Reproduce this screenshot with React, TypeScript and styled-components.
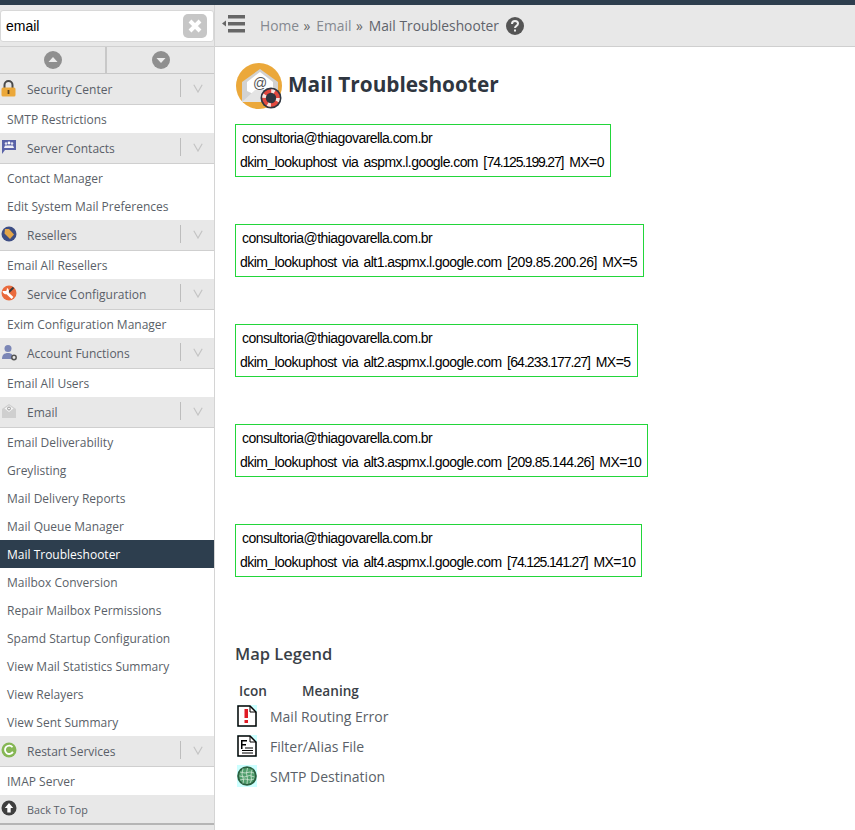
import React from 'react';
import styled, { createGlobalStyle } from 'styled-components';

const Global = createGlobalStyle`
    html, body {
        margin: 0;
        padding: 0;
        background: #fff;
        font-family: "Open Sans", sans-serif;
    }
`;

const Page = styled.div`
    width: 855px;
    height: 830px;
    overflow: hidden;
    display: flex;
    flex-direction: column;
`;

const TopStrip = styled.div`
    height: 5px;
    flex: none;
    background: #2d3e4e;
`;

const Body = styled.div`
    display: flex;
    flex: 1;
    min-height: 0;
`;

const Sidebar = styled.aside`
    width: 214px;
    flex: none;
    border-right: 1px solid #d4d4d4;
    display: flex;
    flex-direction: column;
    background: #fff;
`;

const SearchWrap = styled.div`
    height: 42px;
    flex: none;
    box-sizing: border-box;
    padding: 5px 0 4px;
    background: #e8e8e8;
    border-bottom: 1px solid #d0d0d0;
`;

const SearchBox = styled.div`
    height: 32px;
    box-sizing: border-box;
    background: #fff;
    border: 1px solid #d8d8d8;
    border-radius: 3px;
    display: flex;
    align-items: center;
    justify-content: space-between;
    padding: 0 6px 0 5px;
    font-family: "Liberation Sans", Arial, sans-serif;
    font-size: 14px;
    color: #000;
`;

const ClearButton = styled.div`
    width: 24px;
    height: 24px;
    border-radius: 5px;
    background: #c6c6c6;
    display: flex;
    align-items: center;
    justify-content: center;
`;

const ArrowRow = styled.div`
    height: 26px;
    flex: none;
    display: flex;
    background: #e8e8e8;
    border-bottom: 1px solid #c8c8c8;
`;

const ArrowCell = styled.div<{ $divider?: boolean }>`
    flex: ${p => (p.$divider ? '0 0 107px' : '1')};
    box-sizing: border-box;
    display: flex;
    align-items: center;
    justify-content: center;
    border-right: ${p => (p.$divider ? '2px solid #c8c8c8' : 'none')};
`;

const SectionHead = styled.div`
    height: 31px;
    flex: none;
    box-sizing: border-box;
    background: #e8e8e8;
    border-bottom: 1px solid #cfcfcf;
    display: flex;
    align-items: center;
    font-size: 12px;
    color: #5a5f68;
`;

const SectionIcon = styled.div`
    width: 27px;
    height: 100%;
    flex: none;
    display: flex;
    align-items: center;
    padding: 0 0 2px 1px;
    box-sizing: border-box;
`;

const SectionLabel = styled.span`
    flex: 1;
`;

const Caret = styled.div`
    width: 33px;
    height: 18px;
    flex: none;
    border-left: 1px solid #bdbdbd;
    display: flex;
    align-items: center;
    justify-content: center;
    margin-bottom: 2px;
`;

const Item = styled.div<{ $active?: boolean }>`
    height: 28px;
    flex: none;
    display: flex;
    align-items: center;
    padding-left: 7px;
    font-size: 12px;
    color: ${p => (p.$active ? '#fff' : '#5a5f68')};
    background: ${p => (p.$active ? '#2d3e4e' : 'transparent')};
`;

const BackToTop = styled.div`
    height: 30px;
    flex: none;
    box-sizing: border-box;
    background: #e8e8e8;
    border-bottom: 2px solid #b5b5b5;
    display: flex;
    align-items: center;
    font-size: 10.8px;
    color: #5a5f68;
`;

const SidebarTail = styled.div`
    flex: 1;
    background: #e8e8e8;
`;

const Main = styled.main`
    flex: 1;
    min-width: 0;
    display: flex;
    flex-direction: column;
`;

const Breadcrumb = styled.div`
    height: 42px;
    flex: none;
    box-sizing: border-box;
    background: #e8e8e8;
    border-bottom: 1px solid #cfcfcf;
    display: flex;
    align-items: center;
    padding-left: 7px;
    font-size: 13.8px;
    color: #7c8088;
`;

const Crumb = styled.span<{ $current?: boolean }>`
    color: ${p => (p.$current ? '#5f636b' : '#858990')};
    margin-right: ${p => (p.$current ? '7px' : '4.5px')};
`;

const Sep = styled.span`
    margin-right: 6px;
    color: #666;
`;

const MenuIcon = styled.div`
    width: 38px;
    display: flex;
    align-items: center;
    margin-bottom: 4px;
`;

const Content = styled.div`
    padding: 15px 0 0 20px;
`;

const TitleRow = styled.div`
    display: flex;
    align-items: center;
    gap: 6px;
    height: 47px;
    padding-left: 1px;
`;

const Title = styled.h1`
    margin: 0 0 4px;
    font-size: 20.8px;
    font-weight: 700;
    color: #2f3640;
`;

const Results = styled.div`
    display: flex;
    flex-direction: column;
    align-items: flex-start;
    gap: 47px;
    margin-top: 15px;
`;

const HostBox = styled.div`
    box-sizing: border-box;
    height: 53px;
    border: 1px solid #22d63a;
    padding: 1px 6px 0 4px;
    font-family: "Liberation Sans", Arial, sans-serif;
    font-size: 14px;
    line-height: 24px;
    letter-spacing: -0.56px;
    white-space: nowrap;
    color: #000;
`;

const Email = styled.div`
    padding-left: 2px;
    height: 24px;
`;

const Route = styled.div`
    word-spacing: 2px;
`;

const Ip = styled.span<{ $tracking: number }>`
    letter-spacing: ${p => p.$tracking}px;
`;

const LegendTitle = styled.h2`
    margin: 66px 0 0;
    font-size: 16.5px;
    line-height: 22px;
    font-weight: 600;
    color: #3a3f47;
`;

const LegendHead = styled.div`
    display: flex;
    margin: 16px 0 0 4px;
    font-size: 13.6px;
    line-height: 20px;
    font-weight: 600;
    color: #3a3f47;
`;

const IconHead = styled.span`
    width: 63px;
`;

const LegendRow = styled.div`
    display: flex;
    align-items: center;
    height: 30px;
    margin-left: 2px;
    font-size: 14px;
    color: #5a5f68;
`;

const LegendIcon = styled.div`
    width: 33px;
    display: flex;
`;

const LockIcon = () => (
    <svg width="15" height="17" viewBox="0 0 15 17">
        <path d="M3.5 8V5a4 4 0 0 1 8 0v3" fill="none" stroke="#4a4a4a" strokeWidth="2" />
        <rect x="0.5" y="7.5" width="14" height="9" rx="1.5" fill="#eba83a" />
        <rect x="6.6" y="10" width="1.8" height="4" fill="#5b4320" />
    </svg>
);

const ContactsIcon = () => (
    <svg width="16" height="17" viewBox="0 0 16 17">
        <path d="M1 1h14v10H4l-3 4z" fill="#5a63a8" />
        <circle cx="5" cy="4.5" r="1.3" fill="#e6e6f2" />
        <circle cx="8" cy="4" r="1.4" fill="#fff" />
        <circle cx="11" cy="4.5" r="1.3" fill="#e6e6f2" />
        <path d="M3 9l1-2.5h8L13 9z" fill="#f2f2f8" />
    </svg>
);

const TagIcon = () => (
    <svg width="16" height="16" viewBox="0 0 16 16">
        <circle cx="8" cy="8" r="7.5" fill="#3d4d84" />
        <path d="M4 3h4l5 5.500L9 13 3.500 7.500z" fill="#e4a548" />
    </svg>
);

const WrenchIcon = () => (
    <svg width="16" height="16" viewBox="0 0 16 16">
        <circle cx="8" cy="8" r="7.500" fill="#ea6a3c" />
        <path d="M12.500 2.500L8 7" stroke="#3b3b3b" strokeWidth="2" />
        <path d="M4.500 6.500l7 6.500" stroke="#fff" strokeWidth="2.600" />
        <path d="M1.500 6a3.400 3.400 0 0 0 5.500 2.500 3.400 3.400 0 0 0-1-5.500L5.500 6z" fill="#fff" />
    </svg>
);

const UserGearIcon = () => (
    <svg width="16" height="17" viewBox="0 0 16 17">
        <circle cx="7" cy="4.500" r="3.500" fill="#7b86b6" />
        <path d="M1 15c0-4 2-6 6-6 2 0 3 .5 4 1.500V15z" fill="#7b86b6" />
        <circle cx="13" cy="13.500" r="2.200" fill="none" stroke="#555" strokeWidth="1.500" />
    </svg>
);

const EnvelopeIcon = () => (
    <svg width="16" height="16" viewBox="0 0 16 16">
        <path d="M1 6l7-5 7 5v9H1z" fill="#cfcfcf" />
        <path d="M3.500 5.500L8 2.500l4.500 3L8 9z" fill="#f4f4f4" />
        <circle cx="8" cy="5.500" r="1.500" fill="none" stroke="#999" />
    </svg>
);

const RestartIcon = () => (
    <svg width="16" height="16" viewBox="0 0 16 16">
        <circle cx="8" cy="8" r="7.500" fill="#86b755" />
        <path d="M11.500 5.200a4.200 4.200 0 1 0 .4 4.600" fill="none" stroke="#fff" strokeWidth="1.800" />
    </svg>
);

const UpCircle = () => (
    <svg width="16" height="16" viewBox="0 0 16 16">
        <circle cx="8" cy="8" r="7.500" fill="#3f3f3f" />
        <path d="M8 3l4.200 5H9.700v4.500H6.300V8H3.800z" fill="#fff" />
    </svg>
);

const ChevronCaret = () => (
    <svg width="10" height="9" viewBox="0 0 10 9">
        <path d="M.8.800L5 8 9.200.800" fill="none" stroke="#c4c4c4" strokeWidth="1.200" />
    </svg>
);

const ScrollArrow = ({ down }: { down?: boolean }) => (
    <svg width="18" height="18" viewBox="0 0 18 18">
        <circle cx="9" cy="9" r="9" fill="#8f8f8f" />
        <path d={down ? 'M4.500 7h9L9 12z' : 'M4.500 11h9L9 6z'} fill="#ececec" />
    </svg>
);

const MailLogo = () => (
    <svg width="46" height="46" viewBox="0 0 46 46">
        <circle cx="23" cy="23" r="23" fill="#eba83a" />
        <path d="M6 19L24 6l18 13v20H6z" fill="#d2d2d2" />
        <path d="M11 19L24 9l13 10v9l-13 6-13-6z" fill="#fff" />
        <text x="24" y="25" fontSize="14" textAnchor="middle" fill="#555" fontFamily="Liberation Sans">@</text>
        <path d="M6 39l13-12 10 0 13 12z" fill="#e4e4e4" />
        <circle cx="35" cy="35" r="10.500" fill="#2f3640" />
        <circle cx="35" cy="35" r="7" fill="none" stroke="#e2493f" strokeWidth="3.600" />
        <circle cx="35" cy="35" r="7" fill="none" stroke="#f6e4e0" strokeWidth="3.600" strokeDasharray="3.500 7.500" />
        <circle cx="35" cy="35" r="3.500" fill="#2f3640" />
    </svg>
);

const MenuGlyph = () => (
    <svg width="24" height="18" viewBox="0 0 24 18">
        <path d="M0 8.500L4 5.500v6z" fill="#666" />
        <rect x="6" y="0" width="17" height="3.500" fill="#666" />
        <rect x="6" y="7" width="17" height="3.500" fill="#666" />
        <rect x="6" y="14" width="17" height="3.500" fill="#666" />
    </svg>
);

const HelpIcon = () => (
    <svg width="18" height="18" viewBox="0 0 18 18">
        <circle cx="9" cy="9" r="9" fill="#555" />
        <path d="M6 7c0-2 1.300-3 3-3s3 1 3 2.600c0 2.400-3 2.200-3 4.400" fill="none" stroke="#eee" strokeWidth="2" />
        <rect x="8" y="12.500" width="2" height="2" fill="#eee" />
    </svg>
);

const ClearGlyph = () => (
    <svg width="16" height="16" viewBox="0 0 16 16">
        <path d="M3 3l10 10M13 3L3 13" stroke="#fff" strokeWidth="4" />
    </svg>
);

const ErrorFile = () => (
    <svg width="20" height="22" viewBox="0 0 20 22">
        <rect width="20" height="22" fill="#ccffff" />
        <path d="M1 1h12l6 6v14H1z" fill="#fff" stroke="#000" strokeWidth="1.500" />
        <path d="M13 1v6h6" fill="none" stroke="#000" />
        <rect x="7.500" y="4" width="3.500" height="9" fill="#e01b24" />
        <rect x="7.500" y="15" width="3.500" height="3" fill="#e01b24" />
    </svg>
);

const FilterFile = () => (
    <svg width="20" height="22" viewBox="0 0 20 22">
        <rect width="20" height="22" fill="#ccffff" />
        <path d="M1 1h12l6 6v14H1z" fill="#fff" stroke="#000" strokeWidth="1.500" />
        <path d="M13 1v6h6" fill="none" stroke="#000" />
        <path d="M4 5h6v1.500H5.500V9H9v1.500H5.500V14H4z" fill="#000" />
        <path d="M8 13h8M5 15.500h11M5 18h11" stroke="#000" />
    </svg>
);

const GlobeFile = () => (
    <svg width="20" height="22" viewBox="0 0 20 22">
        <rect width="20" height="22" fill="#ccffff" />
        <circle cx="10" cy="11" r="9.800" fill="#2a5f3f" />
        <circle cx="10" cy="11" r="8" fill="#4f9d6c" />
        <path d="M3 7l5 1 5-1 4 1M2.500 11l5 1 5-1.500 5 1.500M3 15l5-1 5 1 4-1M6 3.500L5 9l1.500 6L6 18.500M10.500 3L9.500 8l1 6-.5 5M15 4.500L14 10l.5 5-1.500 3" fill="none" stroke="#cfe6d4" strokeWidth="0.800" />
    </svg>
);

const sections: { label: string; icon: React.ReactNode; items: string[] }[] = [
    { label: 'Security Center', icon: <LockIcon />, items: ['SMTP Restrictions'] },
    { label: 'Server Contacts', icon: <ContactsIcon />, items: ['Contact Manager', 'Edit System Mail Preferences'] },
    { label: 'Resellers', icon: <TagIcon />, items: ['Email All Resellers'] },
    { label: 'Service Configuration', icon: <WrenchIcon />, items: ['Exim Configuration Manager'] },
    { label: 'Account Functions', icon: <UserGearIcon />, items: ['Email All Users'] },
    {
        label: 'Email',
        icon: <EnvelopeIcon />,
        items: [
            'Email Deliverability',
            'Greylisting',
            'Mail Delivery Reports',
            'Mail Queue Manager',
            'Mail Troubleshooter',
            'Mailbox Conversion',
            'Repair Mailbox Permissions',
            'Spamd Startup Configuration',
            'View Mail Statistics Summary',
            'View Relayers',
            'View Sent Summary',
        ],
    },
    { label: 'Restart Services', icon: <RestartIcon />, items: ['IMAP Server'] },
];

// the reference's digits run tighter or looser per address, hence a tracking value each
const hosts = [
    { name: 'aspmx.l.google.com', ip: '74.125.199.27', mx: 0, tracking: -1.21 },
    { name: 'alt1.aspmx.l.google.com', ip: '209.85.200.26', mx: 5, tracking: -0.48 },
    { name: 'alt2.aspmx.l.google.com', ip: '64.233.177.27', mx: 5, tracking: -0.98 },
    { name: 'alt3.aspmx.l.google.com', ip: '209.85.144.26', mx: 10, tracking: -0.71 },
    { name: 'alt4.aspmx.l.google.com', ip: '74.125.141.27', mx: 10, tracking: -1.16 },
];

const App: React.FC = () => {
    return (
        <Page>
            <Global />
            <TopStrip />
            <Body>
                <Sidebar>
                    <SearchWrap>
                        <SearchBox>
                            email
                            <ClearButton>
                                <ClearGlyph />
                            </ClearButton>
                        </SearchBox>
                    </SearchWrap>
                    <ArrowRow>
                        <ArrowCell $divider>
                            <ScrollArrow />
                        </ArrowCell>
                        <ArrowCell>
                            <ScrollArrow down />
                        </ArrowCell>
                    </ArrowRow>
                    {sections.map(section => (
                        <React.Fragment key={section.label}>
                            <SectionHead>
                                <SectionIcon>{section.icon}</SectionIcon>
                                <SectionLabel>{section.label}</SectionLabel>
                                <Caret>
                                    <ChevronCaret />
                                </Caret>
                            </SectionHead>
                            {section.items.map(item => (
                                <Item key={item} $active={item === 'Mail Troubleshooter'}>
                                    {item}
                                </Item>
                            ))}
                        </React.Fragment>
                    ))}
                    <BackToTop>
                        <SectionIcon>
                            <UpCircle />
                        </SectionIcon>
                        Back To Top
                    </BackToTop>
                    <SidebarTail />
                </Sidebar>
                <Main>
                    <Breadcrumb>
                        <MenuIcon>
                            <MenuGlyph />
                        </MenuIcon>
                        <Crumb>Home</Crumb>
                        <Sep>»</Sep>
                        <Crumb>Email</Crumb>
                        <Sep>»</Sep>
                        <Crumb $current>Mail Troubleshooter</Crumb>
                        <HelpIcon />
                    </Breadcrumb>
                    <Content>
                        <TitleRow>
                            <MailLogo />
                            <Title>Mail Troubleshooter</Title>
                        </TitleRow>
                        <Results>
                            {hosts.map(host => (
                                <HostBox key={host.name}>
                                    <Email>consultoria@thiagovarella.com.br</Email>
                                    <Route>
                                        dkim_lookuphost via {host.name} [<Ip $tracking={host.tracking}>{host.ip}</Ip>] MX={host.mx}
                                    </Route>
                                </HostBox>
                            ))}
                        </Results>
                        <LegendTitle>Map Legend</LegendTitle>
                        <LegendHead>
                            <IconHead>Icon</IconHead>
                            Meaning
                        </LegendHead>
                        <LegendRow>
                            <LegendIcon>
                                <ErrorFile />
                            </LegendIcon>
                            Mail Routing Error
                        </LegendRow>
                        <LegendRow>
                            <LegendIcon>
                                <FilterFile />
                            </LegendIcon>
                            Filter/Alias File
                        </LegendRow>
                        <LegendRow>
                            <LegendIcon>
                                <GlobeFile />
                            </LegendIcon>
                            SMTP Destination
                        </LegendRow>
                    </Content>
                </Main>
            </Body>
        </Page>
    );
};

export default App;
